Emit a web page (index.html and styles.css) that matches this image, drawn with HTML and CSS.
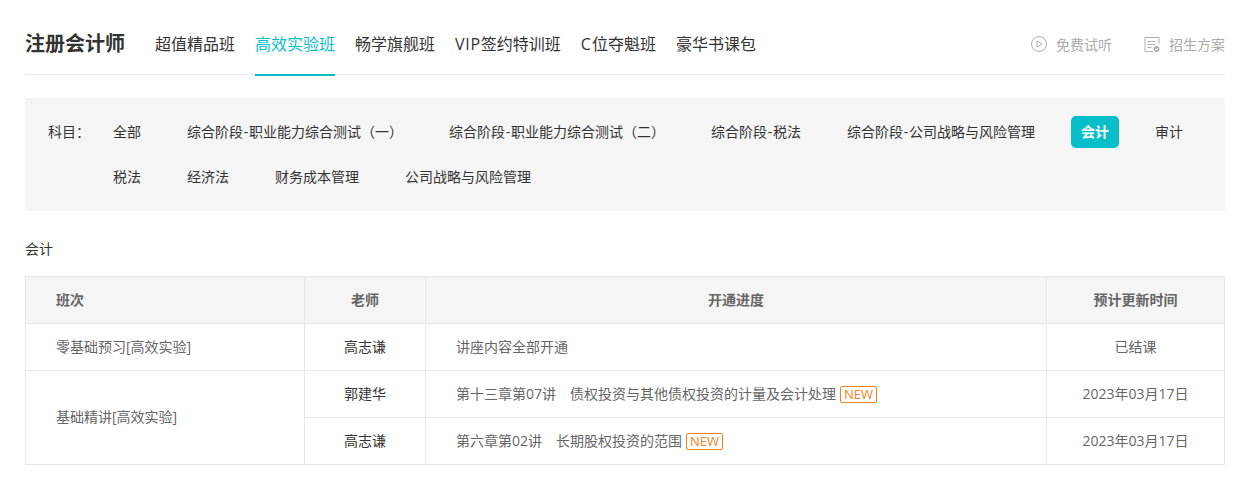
FILE: index.html
```html
<!DOCTYPE html>
<html lang="zh-CN">
<head>
<meta charset="utf-8">
<title>注册会计师</title>
<link rel="stylesheet" href="styles.css">
</head>
<body>
<main class="page">
  <header class="top">
    <h1 class="brand">注册会计师</h1>
    <nav class="tabs">
      <a class="tab">超值精品班</a>
      <a class="tab active">高效实验班</a>
      <a class="tab">畅学旗舰班</a>
      <a class="tab"><span class="latin-vip">VIP</span>签约特训班</a>
      <a class="tab"><span class="latin-c">C</span>位夺魁班</a>
      <a class="tab">豪华书课包</a>
    </nav>
    <div class="actions">
      <a class="action">
        <svg class="action-icon" width="16" height="16" viewBox="0 0 16 16" fill="none" stroke="#b0b0b0" stroke-width="1"><circle cx="8" cy="8" r="7.500"/><path d="M6 4.800v6.400l5-3.200z"/></svg>
        免费试听
      </a>
      <a class="action">
        <svg class="action-icon" width="16" height="16" viewBox="0 0 16 16" fill="none" stroke="#b0b0b0" stroke-width="1"><path d="M15 8V1.500H1v14h8"/><path d="M3.500 5.500h8M3.500 8.500h8M3.500 11.500h4"/><circle cx="12.500" cy="13" r="3" fill="#b0b0b0" stroke="none"/><path d="M11 13l1.200 1.100 1.800-2" stroke="#fff"/></svg>
        招生方案
      </a>
    </div>
  </header>

  <section class="filter">
    <span class="filter-label">科目：</span>
    <ul class="filter-list">
      <li class="chip">全部</li>
      <li class="chip">综合阶段<span class="dash">-</span>职业能力综合测试（一）</li>
      <li class="chip">综合阶段<span class="dash">-</span>职业能力综合测试（二）</li>
      <li class="chip">综合阶段<span class="dash">-</span>税法</li>
      <li class="chip">综合阶段<span class="dash">-</span>公司战略与风险管理</li>
      <li class="chip selected">会计</li>
      <li class="chip">审计</li>
      <li class="chip">税法</li>
      <li class="chip">经济法</li>
      <li class="chip">财务成本管理</li>
      <li class="chip">公司战略与风险管理</li>
    </ul>
  </section>

  <h2 class="section-title">会计</h2>

  <table class="schedule">
    <colgroup>
      <col class="c-class"><col class="c-teacher"><col class="c-progress"><col class="c-time">
    </colgroup>
    <thead>
      <tr><th class="left">班次</th><th>老师</th><th>开通进度</th><th>预计更新时间</th></tr>
    </thead>
    <tbody>
      <tr>
        <td class="left">零基础预习[高效实验]</td>
        <td class="teacher">高志谦</td>
        <td class="left">讲座内容全部开通</td>
        <td>已结课</td>
      </tr>
      <tr>
        <td class="left" rowspan="2">基础精讲[高效实验]</td>
        <td class="teacher">郭建华</td>
        <td class="left">第十三章第07讲　债权投资与其他债权投资的计量及会计处理<span class="new">NEW</span></td>
        <td>2023年03月17日</td>
      </tr>
      <tr>
        <td class="teacher">高志谦</td>
        <td class="left">第六章第02讲　长期股权投资的范围<span class="new">NEW</span></td>
        <td>2023年03月17日</td>
      </tr>
    </tbody>
  </table>
</main>
</body>
</html>
```
FILE: styles.css
```css
* { box-sizing: border-box; }
html, body { margin: 0; padding: 0; background: #fff; }
body {
  font-family: "Open Sans", "Noto Sans CJK SC", sans-serif;
  font-size: 14px;
  color: #333;
}
.page { width: 1200px; margin-left: 25px; }
.top {
  display: flex;
  align-items: stretch;
  height: 75px;
  padding-top: 14px;
  border-bottom: 1px solid #e8e8e8;
}
.brand {
  margin: 0 30px 0 0;
  font-size: 20px;
  font-weight: 700;
  line-height: 60px;
  color: #333;
}
.tabs { display: flex; gap: 20px; }
.tab {
  height: 62px;
  font-size: 16px;
  line-height: 60px;
  color: #333;
  white-space: nowrap;
}
.latin-vip { letter-spacing: 0.7px; }
.latin-c { letter-spacing: 1px; }
.tab.active {
  color: #08bfc9;
  border-bottom: 2px solid #08bfc9;
}
.actions {
  display: flex;
  gap: 32px;
  margin-left: auto;
}
.action {
  display: flex;
  align-items: center;
  gap: 9px;
  height: 60px;
  font-size: 14px;
  color: #aaa;
}
.action-icon { flex: none; }
.filter {
  display: flex;
  margin-top: 23px;
  height: 113px;
  padding: 18px 0 0 23px;
  background: #f5f5f5;
  font-size: 14px;
}
.filter-label {
  flex: none;
  width: 65px;
  line-height: 32px;
  color: #333;
}
.filter-list {
  display: flex;
  flex-wrap: wrap;
  gap: 13px 46px;
  align-items: flex-start;
  align-content: flex-start;
  margin: 0;
  padding: 0;
  list-style: none;
}
.chip {
  height: 32px;
  line-height: 32px;
  color: #333;
  white-space: nowrap;
}
.dash { padding: 0 0.75px; }
.chip.selected {
  padding: 0 10px;
  margin: 0 -10px;
  border-radius: 5px;
  background: #08bfc9;
  color: #fff;
  font-weight: 700;
}
.section-title {
  margin: 0;
  padding-top: 28px;
  height: 65px;
  font-size: 14px;
  font-weight: 400;
  line-height: 20px;
  color: #333;
}
.schedule {
  width: 1199px;
  border-collapse: collapse;
  table-layout: fixed;
  font-size: 14px;
  color: #666;
}
.c-class { width: 279px; }
.c-teacher { width: 121px; }
.c-progress { width: 621px; }
.c-time { width: 178px; }
.schedule th, .schedule td {
  height: 47px;
  padding: 0 0 3px;
  border: 1px solid #e8e8e8;
  text-align: center;
  font-weight: 400;
}
.schedule th {
  background: #f5f5f5;
  font-weight: 700;
  color: #666;
}
.schedule .left { text-align: left; padding-left: 30px; }
.schedule .teacher { color: #333; }
.new {
  display: inline-block;
  height: 17px;
  margin-left: 4px;
  padding: 0 3px;
  border: 1px solid #f58220;
  border-radius: 2px;
  line-height: 15px;
  font-size: 13px;
  color: #f58220;
  vertical-align: 0;
}
```
